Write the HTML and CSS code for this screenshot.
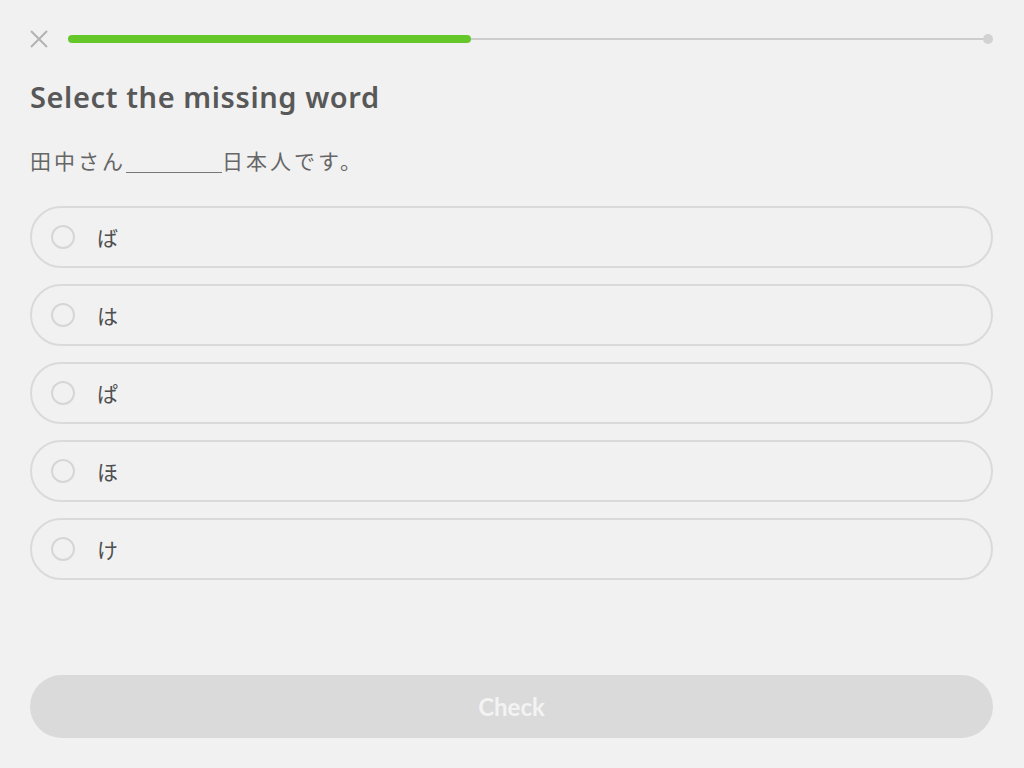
FILE: index.html
```html
<!DOCTYPE html>
<html lang="en">
<head>
  <meta charset="UTF-8">
  <title>Select the missing word</title>
  <link rel="stylesheet" href="styles.css">
</head>
<body>
  <div class="lesson">
    <div class="top-bar">
      <button class="close" aria-label="Close">
        <svg width="18" height="18" viewBox="0 0 18 18">
          <path d="M1 1 L17 17 M17 1 L1 17" stroke="#b3b3b3" stroke-width="2" fill="none"/>
        </svg>
      </button>
      <div class="progress">
        <div class="progress-track"></div>
        <div class="progress-fill" style="width: 43.6%"></div>
        <div class="progress-end"></div>
      </div>
    </div>

    <h1>Select the missing word</h1>
    <p class="sentence">田中さん<span class="blank"></span>日本人です。</p>

    <ul class="choices">
      <li class="choice"><span class="radio"></span><span class="kana">ば</span></li>
      <li class="choice"><span class="radio"></span><span class="kana">は</span></li>
      <li class="choice"><span class="radio"></span><span class="kana">ぱ</span></li>
      <li class="choice"><span class="radio"></span><span class="kana">ほ</span></li>
      <li class="choice"><span class="radio"></span><span class="kana">け</span></li>
    </ul>

    <div class="footer">
      <button class="check" disabled>Check</button>
    </div>
  </div>
</body>
</html>
```

FILE: styles.css
```css
html, body {
  margin: 0;
  height: 100%;
}

body {
  background: #f1f1f1;
  color: #555;
  font-family: Lato, "Noto Sans CJK JP", sans-serif;
}

.lesson {
  box-sizing: border-box;
  height: 100%;
  padding: 30px 31px 30px 30px;
  display: flex;
  flex-direction: column;
}

.top-bar {
  display: flex;
  align-items: center;
  gap: 20px;
  height: 18px;
}

.close {
  border: 0;
  background: none;
  padding: 0;
  width: 18px;
  height: 18px;
  display: flex;
}

.progress {
  position: relative;
  flex: 1;
  height: 8px;
}

.progress-track {
  position: absolute;
  left: 0;
  right: 4px;
  top: 3px;
  height: 2px;
  background: #cdcdcd;
}

.progress-fill {
  position: absolute;
  left: 0;
  top: 0;
  height: 8px;
  border-radius: 4px;
  background: #66c72a;
}

.progress-end {
  position: absolute;
  right: 0;
  top: -1px;
  width: 10px;
  height: 10px;
  border-radius: 50%;
  background: #d2d2d2;
}

h1 {
  margin: 32px 0 0;
  font-family: "Noto Sans", Lato, sans-serif;
  font-size: 29px;
  line-height: 34px;
  font-weight: 600;
  letter-spacing: 0.6px;
  color: #585858;
}

.sentence {
  margin: 32px 0 0;
  font-size: 21px;
  line-height: 28px;
  letter-spacing: 3px;
  color: #666;
  font-family: "Noto Sans CJK JP", sans-serif;
}

.blank {
  display: inline-block;
  width: 96px;
  height: 22px;
  border-bottom: 1px solid #777;
  vertical-align: -4px;
}

.choices {
  list-style: none;
  margin: 32px 0 0;
  padding: 0;
  display: flex;
  flex-direction: column;
  gap: 16px;
}

.choice {
  box-sizing: border-box;
  height: 62px;
  border: 2px solid #dadada;
  border-radius: 31px;
  display: flex;
  align-items: center;
  padding-left: 19px;
}

.radio {
  box-sizing: border-box;
  width: 24px;
  height: 24px;
  border: 2px solid #d6d6d6;
  border-radius: 50%;
}

.kana {
  margin-left: 22px;
  font-family: "Noto Sans CJK JP", sans-serif;
  font-size: 21px;
  color: #4f4f4f;
}

.footer {
  margin-top: auto;
}

.check {
  width: 100%;
  height: 63px;
  border: 0;
  border-radius: 32px;
  background: #dadada;
  color: #f3f3f3;
  font-family: Lato, sans-serif;
  font-size: 24px;
  font-weight: 700;
}
```
